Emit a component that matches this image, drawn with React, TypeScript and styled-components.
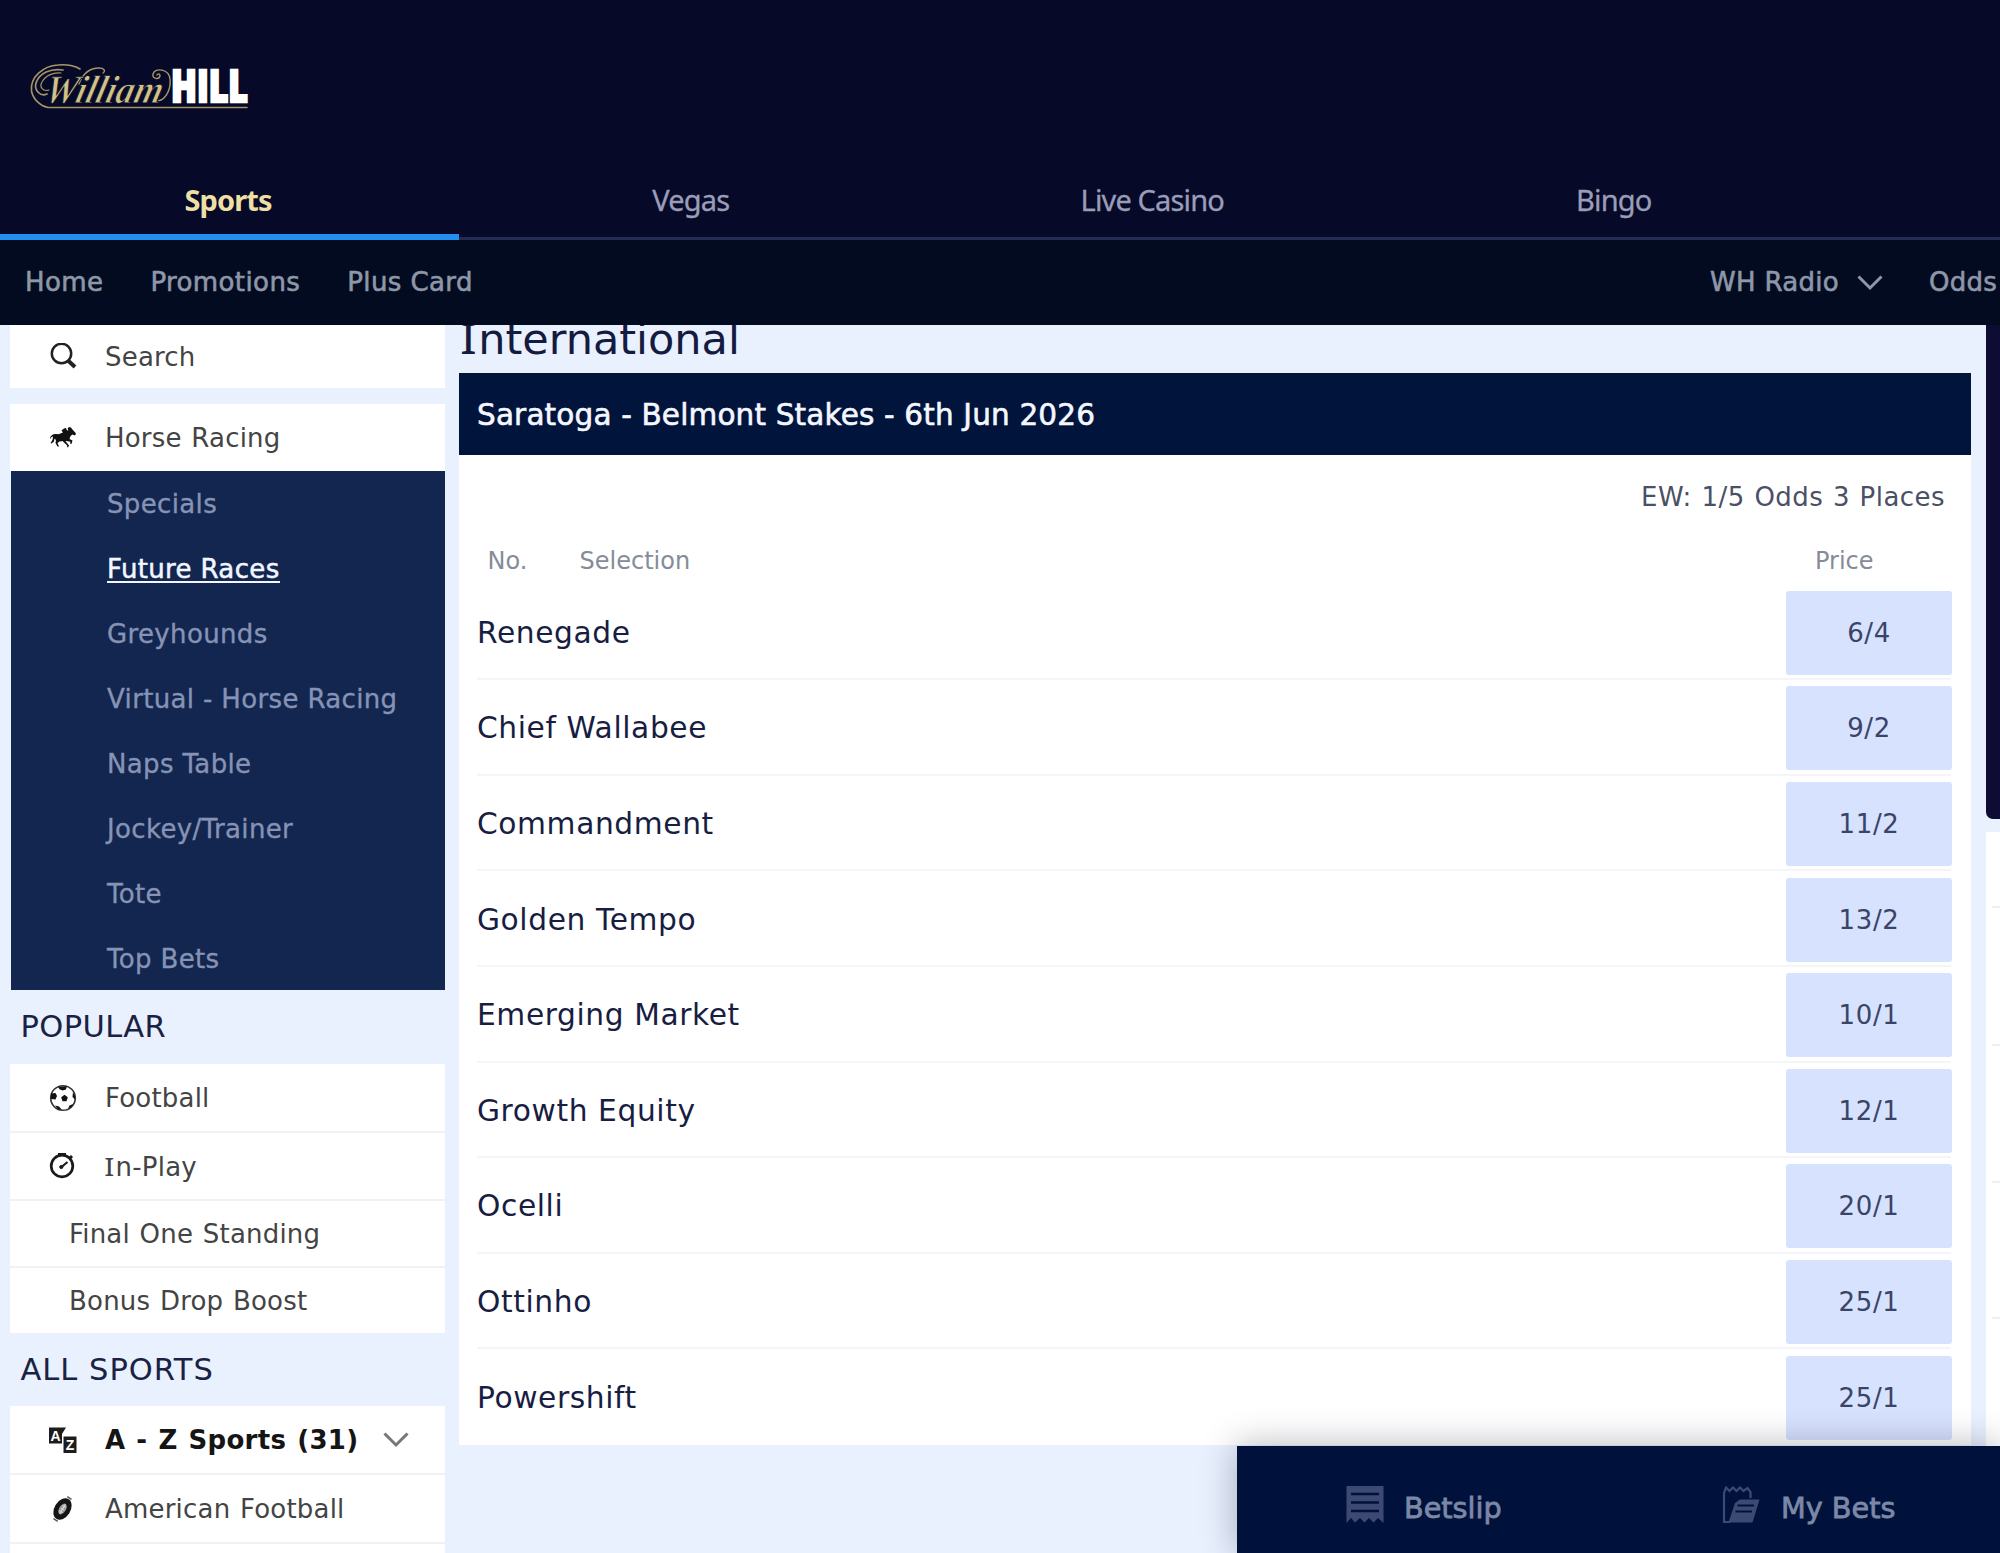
import React from "react";
import styled, { createGlobalStyle, css } from "styled-components";

const GlobalStyle = createGlobalStyle`
  *, *::before, *::after { box-sizing: border-box; }
  html, body { margin: 0; padding: 0; }
  body {
    font-family: Verdana, "DejaVu Sans", sans-serif;
    background: #e9f0fe;
    overflow: hidden;
  }
  ul { list-style: none; margin: 0; padding: 0; }
`;

const Page = styled.div`
  position: relative;
  width: 2000px;
  height: 1553px;
  overflow: hidden;
  display: flex;
  flex-direction: column;
  background: #e9f0fe;
`;

const Header = styled.header`
  height: 240px;
  flex: none;
  display: flex;
  flex-direction: column;
  justify-content: space-between;
  background: #060927;
`;

const LogoLink = styled.div`
  padding: 60px 0 0 28px;
  height: 120px;
  svg { display: block; overflow: visible; }
`;

const Tabs = styled.nav`
  display: flex;
  height: 80px;
  border-bottom: 3px solid #242b54;
`;

const Tab = styled.div<{ $active?: boolean }>`
  flex: none;
  width: 461.5px;
  height: 80px;
  display: flex;
  justify-content: center;
  font-family: "Noto Sans", sans-serif;
  font-size: 29px;
  line-height: 79px;
  letter-spacing: -0.85px;
  color: #9a9db8;
  -webkit-text-stroke: 0.3px #9a9db8;
  ${(p) =>
    p.$active &&
    css`
      width: 459px;
      margin-right: 1px;
      padding-right: 3px;
      color: #eedfa4;
      font-weight: 700;
      letter-spacing: -0.9px;
      -webkit-text-stroke: 0;
      border-bottom: 6px solid #2190ee;
    `}
`;

const NavBar = styled.nav`
  height: 85px;
  flex: none;
  display: flex;
  padding-left: 25px;
  background: #020b20;
  color: #8e97a8;
  font-size: 26px;
  line-height: 84px;
  -webkit-text-stroke: 0.6px #8e97a8;
  white-space: nowrap;
`;

const NavItem = styled.span<{ $gap: number }>`
  margin-right: ${(p) => p.$gap}px;
  letter-spacing: 0.4px;
`;

const NavRight = styled.div`
  margin-left: auto;
  width: 290px;
  flex: none;
  display: flex;
  letter-spacing: 0.3px;
  svg { margin: 34px 46px 0 18px; flex: none; }
`;

const Body = styled.main`
  flex: 1;
  min-height: 0;
  display: grid;
  grid-template-columns: 435px 1512px 14px;
  column-gap: 14px;
  padding-left: 10px;
  overflow: hidden;
`;

const Sidebar = styled.aside`
  display: flex;
  flex-direction: column;
  height: 1300px;
`;

const SideRow = styled.div<{ $h: number; $gapAfter?: number; $indent?: boolean; $bold?: boolean }>`
  flex: none;
  height: ${(p) => p.$h}px;
  margin-bottom: ${(p) => p.$gapAfter ?? 0}px;
  padding-left: ${(p) => (p.$indent ? 59 : 39)}px;
  display: flex;
  align-items: center;
  background: #fff;
  color: ${(p) => (p.$bold ? "#151515" : "#444")};
  font-size: 26px;
  font-weight: ${(p) => (p.$bold ? 700 : 400)};
  letter-spacing: ${(p) => (p.$bold ? 0.3 : 0.2)}px;
  word-spacing: ${(p) => (p.$bold ? 1.6 : 1.2)}px;
  white-space: nowrap;
`;

const IconSlot = styled.span`
  width: 56px;
  flex: none;
  display: flex;
  svg { display: block; }
`;

const SideLabel = styled.span`
  padding-top: 1px;
`;

const SerifI = styled.span`
  font-family: "Noto Sans", sans-serif;
  display: inline-block;
  transform: scaleX(1.15);
  margin-right: 0.06em;
  line-height: 1;
`;

const ChevronSlot = styled.span`
  margin-left: 25px;
  display: flex;
`;

const SubMenu = styled.ul`
  flex: none;
  height: 519px;
  margin: 0 0 0 1px;
  padding: 0;
  background: #122650;
`;

const SubItem = styled.li<{ $active?: boolean }>`
  height: 65px;
  line-height: 66px;
  padding-left: 96px;
  font-size: 26px;
  letter-spacing: 0.35px;
  color: ${(p) => (p.$active ? "#f2f6ff" : "#8693b5")};
  -webkit-text-stroke: ${(p) => (p.$active ? "0.5px #f2f6ff" : "0.35px #8693b5")};
  span {
    ${(p) =>
      p.$active &&
      css`
        display: inline-block;
        line-height: 23px;
        border-bottom: 2.5px solid #f2f6ff;
      `}
  }
`;

const GroupTitle = styled.h3<{ $h: number; $track: number }>`
  flex: none;
  margin: 0;
  height: ${(p) => p.$h}px;
  line-height: ${(p) => p.$h}px;
  padding-left: 10.5px;
  font-size: 30.5px;
  font-weight: 400;
  letter-spacing: ${(p) => p.$track}px;
  color: #1a2244;
`;

const List = styled.div`
  flex: none;
  display: flex;
  flex-direction: column;
  background: #eff1f6;
`;

const Content = styled.section`
  display: flex;
  flex-direction: column;
`;

const Region = styled.h1`
  flex: none;
  margin: -16px 0 0;
  height: 64px;
  line-height: 61px;
  padding-left: 2px;
  font-size: 43px;
  font-weight: 400;
  letter-spacing: 0;
  color: #141a40;
`;

const Card = styled.div`
  flex: none;
  height: 1072px;
  background: #fff;
`;

const CardHeader = styled.h2`
  margin: 0;
  height: 82px;
  line-height: 84px;
  padding-left: 18px;
  background: #00143c;
  color: #f5f7ff;
  -webkit-text-stroke: 0.6px #f5f7ff;
  font-size: 29.5px;
  font-weight: 400;
  letter-spacing: 0.15px;
`;

const Terms = styled.div`
  height: 83px;
  line-height: 84px;
  padding-right: 26px;
  text-align: right;
  font-size: 26px;
  letter-spacing: 0.45px;
  word-spacing: 1px;
  color: #4a5066;
`;

const Columns = styled.div`
  height: 46.6px;
  line-height: 46px;
  display: grid;
  grid-template-columns: 92px 1fr 156px;
  padding-left: 28.5px;
  font-size: 24px;
  color: #858c98;
`;

const Runner = styled.div`
  height: 95.6px;
  margin: 0 20px 0 18px;
  display: flex;
  align-items: center;
  justify-content: space-between;
  border-bottom: 2px solid #f3f5f8;
  &:last-child { border-bottom-color: transparent; }
`;

const RunnerName = styled.span`
  font-size: 29.7px;
  letter-spacing: 0.6px;
  color: #181d42;
  padding-top: 2px;
`;

const Price = styled.span`
  width: 166px;
  height: 84px;
  margin: 3px -1px 0 0;
  border-radius: 3px;
  background: #d7e2fe;
  color: #3a4468;
  font-size: 26px;
  line-height: 84px;
  letter-spacing: 0.6px;
  text-align: center;
`;

const Aside = styled.aside`
  width: 14px;
  margin-left: 1px;
  overflow: hidden;
`;

const Promo = styled.div`
  height: 494px;
  margin-bottom: 13px;
  background: #0f0c34;
  border-bottom-left-radius: 7px;
`;

const AsideCard = styled.div`
  height: 720px;
  background: #fff;
  padding: 0 0 0 6px;
`;

const AsideRow = styled.div<{ $h: number }>`
  height: ${(p) => p.$h}px;
  border-bottom: 2px solid #edf0f5;
`;

const Dock = styled.div`
  position: absolute;
  right: 0;
  bottom: 0;
  width: 763px;
  height: 107px;
  display: flex;
  background: #00123b;
  box-shadow: 0 0 34px rgba(0, 10, 30, 0.3);
`;

const DockItem = styled.div<{ $left: number; $w: number; $gap: number }>`
  width: ${(p) => p.$w}px;
  padding-left: ${(p) => p.$left}px;
  flex: none;
  display: flex;
  gap: ${(p) => p.$gap}px;
  font-size: 28.7px;
  line-height: 124px;
  color: #7b88a6;
  -webkit-text-stroke: 0.8px #7b88a6;
  white-space: nowrap;
  svg { margin-top: 40px; flex: none; }
`;

const Logo = () => (
  <svg width="224" height="54" viewBox="28 60 224 54">
    <g fill="none" stroke="#a59568" strokeLinecap="round">
      <path d="M247 107.500H48C40 106 33 99 31.500 91C30 77 43 66 58 65C67 64 76 66 80 69" strokeWidth="1.600" />
      <path d="M47 94C40 97 34 90 36 83C39 73 51 68 63 70" strokeWidth="1.700" />
      <path d="M49 90C43 92 39 87 42 82C45 76 53 72 61 73" strokeWidth="1.200" />
      <path d="M79 84C82 76 88 68 99 68C104 68 106 71 103 73" strokeWidth="1.400" />
      <path d="M158 101C167 99 171 88 170 79C169 69 155 67 153 74C152 79 159 80 160 76C160 74 158 73 157 75" strokeWidth="1.400" />
    </g>
    <text
      transform="translate(43 102.500) skewX(-14)"
      fontFamily="'Liberation Serif', serif"
      fontStyle="italic"
      fontWeight="700"
      fontSize="40"
      textLength="117"
      lengthAdjust="spacingAndGlyphs"
      fill="#d2c288"
      stroke="#060927"
      strokeWidth="0.900"
    >
      William
    </text>
    <text
      x="171"
      y="102"
      fontFamily="'Open Sans', sans-serif"
      fontWeight="800"
      fontSize="44"
      textLength="77"
      lengthAdjust="spacingAndGlyphs"
      fill="#fff"
      stroke="#fff"
      strokeWidth="2.400"
    >
      HILL
    </text>
  </svg>
);

const Chevron = ({ color, width = 26 }: { color: string; width?: number }) => (
  <svg width={width} height="18" viewBox="0 0 26 18" fill="none" stroke={color} strokeWidth="3">
    <path d="M1.500 2.500L13 14L24.500 2.500" />
  </svg>
);

const SearchIcon = () => (
  <svg width="28" height="28" viewBox="0 0 28 28" fill="none" stroke="#222">
    <circle cx="12.500" cy="10.500" r="9.700" strokeWidth="2.500" />
    <path d="M19 17.500L26 24" strokeWidth="4" />
  </svg>
);

const HorseIcon = () => (
  <svg width="28" height="22" viewBox="0 0 28 22" fill="#111">
    <path d="M1 11C2 8 4.500 6.500 7.500 7C10 7.500 12 6.500 14 5.500L12.500 3.500L15 1.500L17 1L18 3.500L20 3L20 1.500L22 .800L23.500 2.500L27 6.500L26 8.500L23.500 7.500L21.500 9L20.500 12L23.500 13.500L22.500 17L21 16.500L21.500 14.700L17.500 14L14 14L10.500 14.500L8.500 16L10 19.500L8.500 19.500L6.500 16L7 13L5.500 11.500L5 14.500L2.500 16.500L1.500 16L3.500 13L4 9.500C3 9.500 2 10.200 1.500 12Z" />
    <path d="M16 13.500L20 18.500L19 20.500L18 19.800L18.200 18.500L13.500 14Z" />
    <circle cx="20.500" cy="1.700" r="1.700" />
  </svg>
);

const FootballIcon = () => (
  <svg width="28" height="28" viewBox="0 0 28 28" fill="#111">
    <circle cx="14" cy="14" r="12.300" fill="#fff" stroke="#333" strokeWidth="1.600" />
    <path d="M15.500 10.800L18.800 13.300L17.500 17.200H13.500L12.200 13.300Z" />
    <path d="M9 2.800L18 2.300L17 5.500L13.500 6.500L10.500 5.300Z" />
    <path d="M2 9.500L6.500 9L8 12L6.500 15.500L2 15Z" />
    <path d="M24 8L26 12V15.500L23.500 13Z" />
    <path d="M6 21.500L10 22.500L13 26L9 25.500Z" />
    <path d="M19 24.500L20.500 21.500L24 20L22.500 23Z" />
  </svg>
);

const StopwatchIcon = () => (
  <svg width="28" height="28" viewBox="0 0 28 28" fill="none" stroke="#1a1a1a">
    <circle cx="13" cy="14" r="10.800" strokeWidth="2.700" />
    <path d="M9 2.500H17" strokeWidth="3" />
    <path d="M20.500 6.500L23 4" strokeWidth="3" />
    <path d="M12.500 15L18.500 10" strokeWidth="2.200" />
    <circle cx="12.300" cy="15" r="1.600" fill="#1a1a1a" />
  </svg>
);

const AZIcon = () => (
  <svg width="28" height="28" viewBox="0 0 28 28" fontFamily="'Liberation Sans', sans-serif" fontWeight="700" fontSize="14">
    <path d="M0 1.500H17L13 8V17.500H0Z" fill="#1c1c1c" />
    <path d="M14.500 10.500H27.500V27H14.500Z" fill="#1c1c1c" />
    <text x="1.500" y="14.500" fill="#fff">A</text>
    <text x="16.700" y="24" fill="#fff">Z</text>
  </svg>
);

const AmericanFootballIcon = () => (
  <svg width="28" height="28" viewBox="0 0 28 28">
    <g transform="rotate(-58 13.500 14)">
      <ellipse cx="13.500" cy="14" rx="11.500" ry="8" fill="#151515" />
      <ellipse cx="13.500" cy="14" rx="6" ry="3.400" fill="#999" />
      <path d="M8 14H19M10.500 12V16M13.500 12V16M16.500 12V16" stroke="#ddd" strokeWidth="1" />
      <path d="M.500 11.500V16.500M26.500 11.500V16.500" stroke="#555" strokeWidth="1.400" />
    </g>
  </svg>
);

const BetslipIcon = () => (
  <svg width="38" height="38" viewBox="0 0 38 38">
    <path d="M.500 0H37.500V37L32 32L27.500 36.500L23 32L18.500 36.500L14 32L9 36.500L5 32L.500 37Z" fill="#3c4a73" />
    <path d="M5 8H33M5 16.500H33M5 25H33" stroke="#00123b" strokeWidth="2.700" />
  </svg>
);

const MyBetsIcon = () => (
  <svg width="38" height="38" viewBox="0 0 38 38">
    <path
      d="M8 36H2V7L4 1.500L7.500 5L11 1.500L14.500 5L18 1.500L21.500 5L25.500 2L28.500 6V12"
      fill="none"
      stroke="#3c4a73"
      strokeWidth="2.200"
    />
    <path d="M13 17L18 13.500H37.500L30.500 36.500H6.500Z" fill="#3c4a73" />
    <path d="M15.500 19.500H32M13.500 25.500H30" stroke="#00123b" strokeWidth="2" />
  </svg>
);

const subItems = [
  "Specials",
  "Future Races",
  "Greyhounds",
  "Virtual - Horse Racing",
  "Naps Table",
  "Jockey/Trainer",
  "Tote",
  "Top Bets",
];

const runners: [string, string][] = [
  ["Renegade", "6/4"],
  ["Chief Wallabee", "9/2"],
  ["Commandment", "11/2"],
  ["Golden Tempo", "13/2"],
  ["Emerging Market", "10/1"],
  ["Growth Equity", "12/1"],
  ["Ocelli", "20/1"],
  ["Ottinho", "25/1"],
  ["Powershift", "25/1"],
];

export default function App() {
  return (
    <>
      <GlobalStyle />
      <Page>
        <Header>
          <LogoLink>
            <Logo />
          </LogoLink>
          <Tabs>
            <Tab $active>Sports</Tab>
            <Tab>Vegas</Tab>
            <Tab>Live Casino</Tab>
            <Tab>Bingo</Tab>
          </Tabs>
        </Header>
        <NavBar>
          <NavItem $gap={47}>Home</NavItem>
          <NavItem $gap={47}>Promotions</NavItem>
          <NavItem $gap={0}>Plus Card</NavItem>
          <NavRight>
            <span>WH Radio</span>
            <Chevron color="#8e97a8" />
            <span>Odds</span>
          </NavRight>
        </NavBar>
        <Body>
          <Sidebar>
            <SideRow $h={63} $gapAfter={16}>
              <IconSlot>
                <SearchIcon />
              </IconSlot>
              <SideLabel>Search</SideLabel>
            </SideRow>
            <SideRow $h={67}>
              <IconSlot>
                <HorseIcon />
              </IconSlot>
              <SideLabel>Horse Racing</SideLabel>
            </SideRow>
            <SubMenu>
              {subItems.map((s) => (
                <SubItem key={s} $active={s === "Future Races"}>
                  <span>{s}</span>
                </SubItem>
              ))}
            </SubMenu>
            <GroupTitle $h={74} $track={0.4}>
              POPULAR
            </GroupTitle>
            <List>
              <SideRow $h={67} $gapAfter={2}>
                <IconSlot>
                  <FootballIcon />
                </IconSlot>
                <SideLabel>Football</SideLabel>
              </SideRow>
              <SideRow $h={66} $gapAfter={2}>
                <IconSlot>
                  <StopwatchIcon />
                </IconSlot>
                <SideLabel>
                  <SerifI>I</SerifI>n-Play
                </SideLabel>
              </SideRow>
              <SideRow $h={65} $gapAfter={2} $indent>
                <SideLabel>Final One Standing</SideLabel>
              </SideRow>
              <SideRow $h={65} $indent>
                <SideLabel>Bonus Drop Boost</SideLabel>
              </SideRow>
            </List>
            <GroupTitle $h={73} $track={1}>
              ALL SPORTS
            </GroupTitle>
            <List>
              <SideRow $h={67} $gapAfter={2} $bold>
                <IconSlot>
                  <AZIcon />
                </IconSlot>
                <SideLabel>A - Z Sports (31)</SideLabel>
                <ChevronSlot>
                  <Chevron color="#777" />
                </ChevronSlot>
              </SideRow>
              <SideRow $h={67} $gapAfter={2}>
                <IconSlot>
                  <AmericanFootballIcon />
                </IconSlot>
                <SideLabel>American Football</SideLabel>
              </SideRow>
              <SideRow $h={67} />
            </List>
          </Sidebar>
          <Content>
            <Region>
              <SerifI>I</SerifI>nternational
            </Region>
            <Card>
              <CardHeader>Saratoga - Belmont Stakes - 6th Jun 2026</CardHeader>
              <Terms>EW: 1/5 Odds 3 Places</Terms>
              <Columns>
                <span>No.</span>
                <span>Selection</span>
                <span>Price</span>
              </Columns>
              <div>
                {runners.map(([name, price]) => (
                  <Runner key={name}>
                    <RunnerName>{name}</RunnerName>
                    <Price>{price}</Price>
                  </Runner>
                ))}
              </div>
            </Card>
          </Content>
          <Aside>
            <Promo />
            <AsideCard>
              <AsideRow $h={76} />
              <AsideRow $h={138} />
              <AsideRow $h={137} />
              <AsideRow $h={136} />
            </AsideCard>
          </Aside>
        </Body>
        <Dock>
          <DockItem $left={109} $w={485} $gap={20}>
            <BetslipIcon />
            <span>Betslip</span>
          </DockItem>
          <DockItem $left={0} $w={278} $gap={21}>
            <MyBetsIcon />
            <span>My Bets</span>
          </DockItem>
        </Dock>
      </Page>
    </>
  );
}
